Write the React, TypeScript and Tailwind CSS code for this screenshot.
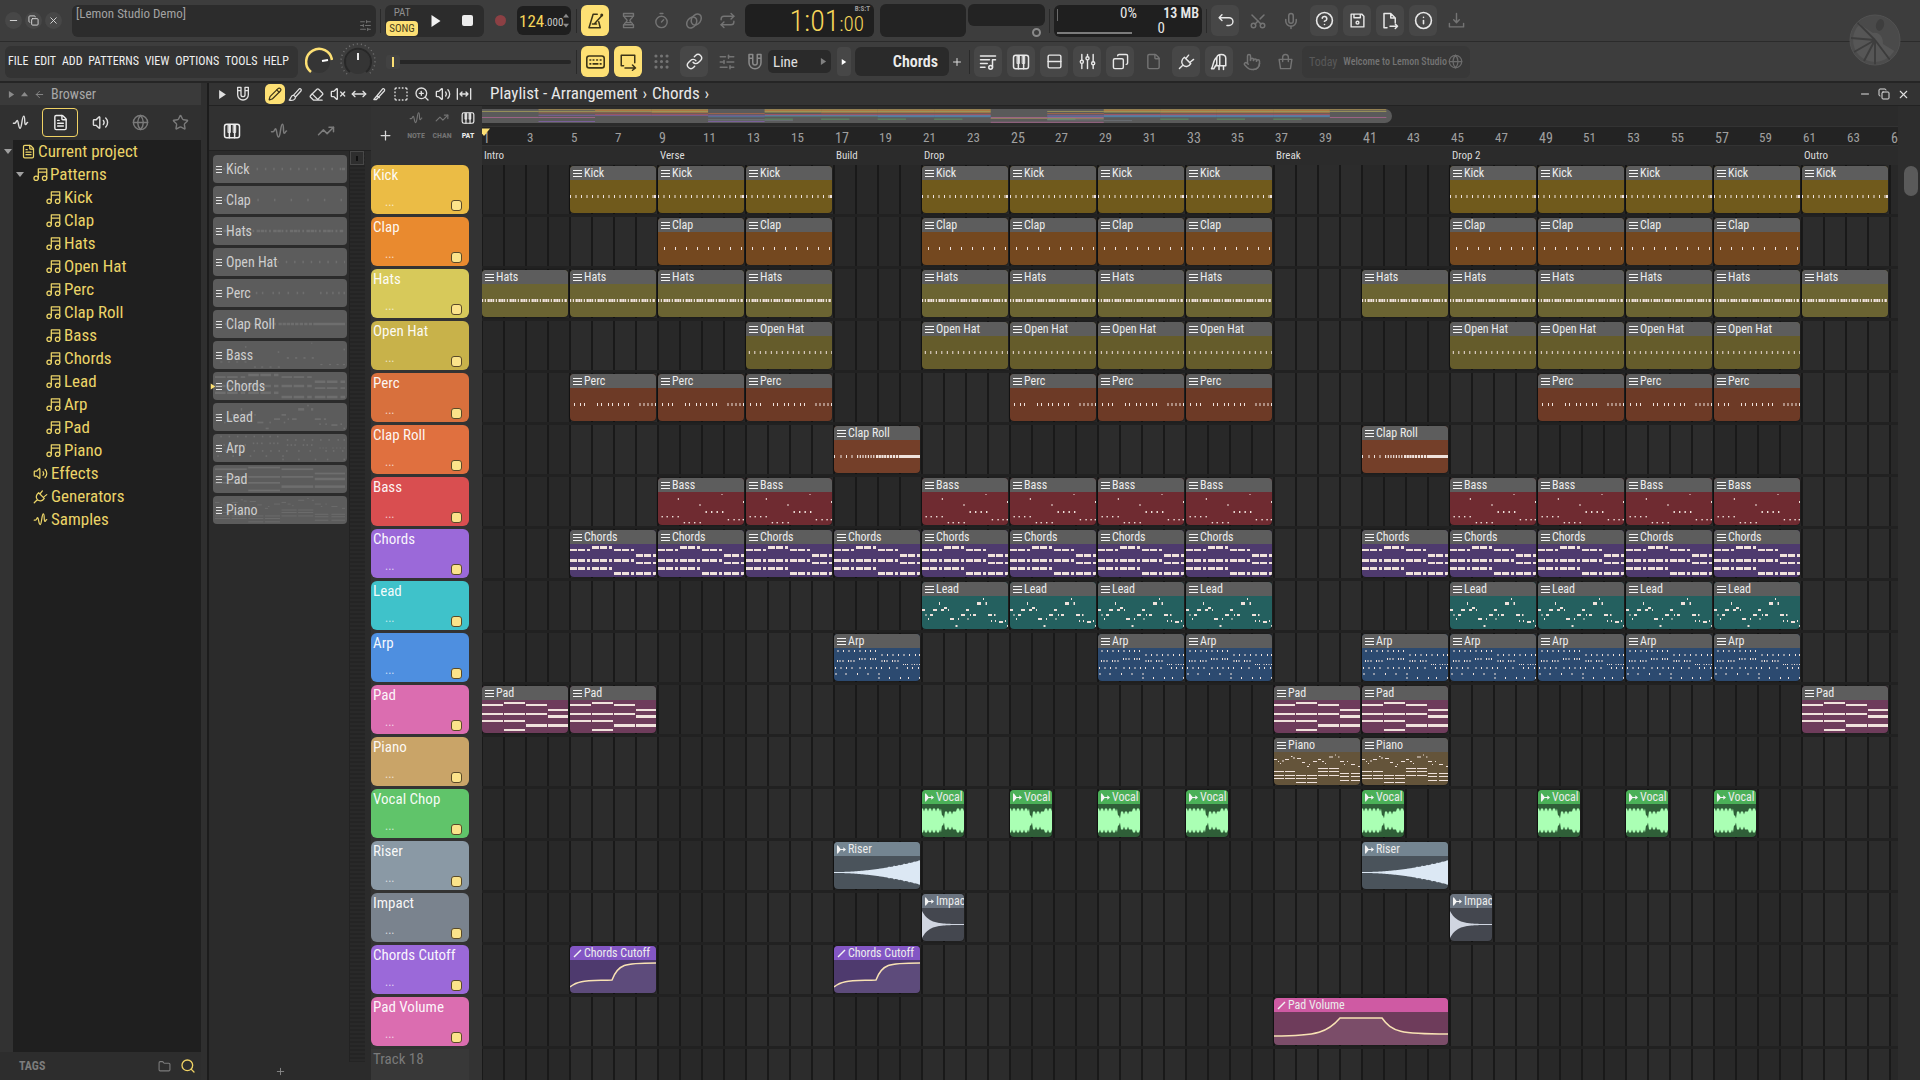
import type { ReactNode } from 'react'
import {
  ArrowLeft,
  CircleHelp,
  Copy,
  Eraser,
  File,
  FileText,
  Folder,
  Globe,
  Grip,
  Info,
  Link,
  Mic,
  Minus,
  MoveHorizontal,
  Pencil,
  Plus,
  Pointer,
  Repeat,
  Rows2,
  Scissors,
  Search,
  SlidersHorizontal,
  SquareDashed,
  Star,
  Timer,
  TrendingUp,
  Volume2,
  VolumeX,
  X,
  ZoomIn,
} from 'lucide-react'

type Rect = [x: number, y: number, w: number, h: number]
type ClipKind = 'pattern' | 'audio' | 'automation'

interface Track {
  name: string
  kind: ClipKind
  color: string
  body: string
  head: string
  bars: number[]
  length: number
  label?: string
}

/* ---------- note data, in a 86 x 33 box ---------- */

const range = (n: number) => Array.from({ length: n }, (_, i) => i)

const chordHit = (x: number, rows: [number, number][]): Rect[] =>
  rows.flatMap(([y, h]) => [
    [x, y, 7, h] as Rect,
    [x + 8, y, 7, h] as Rect,
    [x + 17, y, 3, h] as Rect,
  ])

const row = (y: number, xs: number[], w = 1, h = 2): Rect[] => xs.map((x) => [x, y, w, h] as Rect)

const notes: Record<string, Rect[]> = {
  Kick: [...range(16).map((i) => [i * 5.5, 15, 1, 3] as Rect), [84, 15, 2, 3]],
  Clap: range(8).map((i) => [6 + i * 11, 15, 1, 3] as Rect),
  Hats: range(31).map((i) => [i * 2.75, 15, i % 4 < 2 ? 1.2 : 2.3, 3] as Rect),
  'Open Hat': range(16).map((i) => [2.8 + i * 5.5, 15, 1, 3] as Rect),
  Perc: row(15, [4, 10, 14, 27, 31, 38, 42, 48, 54, 58, 69.5, 73.5, 77.5, 81.5, 85], 1, 3),
  'Clap Roll': [
    ...row(15, [0, 6.5, 12, 17.5], 1, 3),
    ...row(15, [23, 25.7, 28.4, 31.1, 33.8, 36.5, 39.2], 1.2, 3),
    ...row(15, [42, 44.7, 47.4, 50.1, 53, 56, 59, 62], 2.2, 3),
    [65, 15, 21, 3],
  ],
  Bass: [
    ...row(24, [3.5, 8.5, 14, 19.5], 1.4, 1.4),
    ...row(30, [25.7, 30.5, 36, 41.5], 1.4, 1.4),
    ...row(19, [47.5, 53, 58.5, 64], 1.4, 2),
    ...row(27, [69.7, 75.4, 80.4, 84.6], 1.4, 1.4),
    [19.8, 6, 1, 2],
    [41.5, 12, 1, 2],
    [63.5, 2, 1, 1],
    [85, 9, 1, 2],
  ],
  Chords: [
    ...chordHit(0, [[5, 2], [15, 3], [23, 3]]),
    ...chordHit(22, [[2, 3], [15, 3], [23, 3]]),
    ...chordHit(44, [[5, 2], [15, 3], [28, 3]]),
    ...chordHit(66, [[10, 3], [18, 2], [28, 3]]),
  ],
  Lead: [
    [0, 13, 3, 2], [3.5, 18, 1, 2], [6, 22, 1, 2], [8, 18, 3, 2], [11, 13, 4, 2], [17, 6, 1, 3],
    [19, 13, 3, 2], [22, 11, 3, 2], [26, 13, 1, 2], [28, 22, 4, 2], [33.5, 29, 2, 2], [36, 22, 1, 2],
    [39, 18, 4, 2], [44, 13, 3, 2], [45.5, 22, 1, 2], [48, 18, 1, 2], [51, 18, 3, 2], [55, 6, 4, 3],
    [61, 2, 1, 2], [63.5, 6, 1.5, 3], [66, 18, 4, 2], [69, 24, 1, 2], [72, 18, 1.5, 2], [73, 24, 1, 2],
    [77, 25, 4, 2], [83, 24, 1, 2], [85, 29, 1, 2],
  ],
  Arp: [
    ...row(2, [3.5, 9, 14.5, 20, 25.5, 31, 36, 41]),
    ...row(6, [47.5, 53, 58.5, 64, 69.5, 75, 81, 85]),
    ...row(10, [25, 27.5, 30.5, 36, 38.5, 41]),
    ...row(12, [3, 5.5, 8.5, 14, 16.5, 19.5, 47.5, 50, 52.5, 58, 60.5, 63.5]),
    ...row(16, [69, 71, 73, 77.5, 80, 82.5, 85], 1, 1),
    ...row(19, [1, 6.5, 12, 17.5, 25.5, 31, 36.5, 42, 47, 55, 62.5, 73, 78, 84]),
    ...row(25, [1.5, 11.5, 23, 33.5, 44.5]),
    ...row(29, [44.5, 55, 66, 74, 85]),
  ],
  Pad: [
    ...row(4, [0, 44], 21, 2),
    ...row(13, [0, 22, 44], 21, 2),
    ...row(20, [0, 22], 21, 2),
    [22, 2, 21, 2],
    [22, 29, 21, 2],
    [66, 9, 20, 2],
    [66, 15, 20, 3],
    [44, 24, 21, 3],
    [66, 24, 20, 3],
  ],
  Piano: [
    [0, 7, 3, 1], [4, 9, 1, 1], [6, 11, 1, 1], [8, 8.5, 2, 1], [11, 7, 4, 1], [17, 4, 1.5, 1],
    [19, 5.5, 2, 1], [23, 6, 4, 1], [28, 10, 3, 1], [33, 14, 2, 1], [35, 12, 1, 1], [39, 9, 4, 1],
    [44, 7, 3, 1], [48, 9, 2, 1], [51, 11, 1, 1], [55, 4.5, 4, 1], [61, 2.5, 1, 1], [64, 4.5, 1.5, 1],
    [66, 9, 4, 1], [70, 12, 1, 1], [73, 9, 1, 1], [77, 12, 4, 1], [84, 14, 2, 1],
    ...row(19, [0, 11], 10, 1),
    ...row(23, [0, 11, 22, 33], 10, 1),
    ...row(26, [0, 11, 22, 33], 10, 1),
    ...row(30, [22, 33], 10, 1),
    ...row(16, [44, 55], 10, 1),
    ...row(19, [44, 55], 10, 1),
    ...row(23, [44, 55], 10, 1),
    ...row(21, [66, 77], 9, 1),
    ...row(24, [66, 77], 9, 1),
    ...row(28, [66, 77], 9, 1),
  ],
}

const drops = [21, 25, 29, 33, 45, 49, 53, 57]
const GREY = '#5d5d5d'

const tracks: Track[] = [
  { name: 'Kick', kind: 'pattern', color: '#ebbc45', body: '#705a1c', head: GREY, bars: [5, 9, 13, ...drops, 61], length: 4 },
  { name: 'Clap', kind: 'pattern', color: '#e98a2f', body: '#74481f', head: GREY, bars: [9, 13, ...drops], length: 4 },
  { name: 'Hats', kind: 'pattern', color: '#d7c95a', body: '#6b6432', head: GREY, bars: [1, 5, 9, 13, 41, ...drops, 61], length: 4 },
  { name: 'Open Hat', kind: 'pattern', color: '#c8b24a', body: '#655c2b', head: GREY, bars: [13, ...drops], length: 4 },
  { name: 'Perc', kind: 'pattern', color: '#d8703d', body: '#6d3a26', head: GREY, bars: [5, 9, 13, 25, 29, 33, 49, 53, 57], length: 4 },
  { name: 'Clap Roll', kind: 'pattern', color: '#e0703f', body: '#743f29', head: GREY, bars: [17, 41], length: 4 },
  { name: 'Bass', kind: 'pattern', color: '#d94e50', body: '#6f2b31', head: GREY, bars: [9, 13, ...drops], length: 4 },
  { name: 'Chords', kind: 'pattern', color: '#9b69d9', body: '#4e3a6e', head: GREY, bars: [5, 9, 13, 17, 41, ...drops], length: 4 },
  { name: 'Lead', kind: 'pattern', color: '#3fc2ca', body: '#24605f', head: GREY, bars: drops, length: 4 },
  { name: 'Arp', kind: 'pattern', color: '#4e8fe0', body: '#2c4a70', head: GREY, bars: [17, 29, 33, 41, 45, 49, 53, 57], length: 4 },
  { name: 'Pad', kind: 'pattern', color: '#db6db0', body: '#6e3c5b', head: GREY, bars: [1, 5, 37, 41, 61], length: 4 },
  { name: 'Piano', kind: 'pattern', color: '#c9a468', body: '#64543a', head: GREY, bars: [37, 41], length: 4 },
  { name: 'Vocal Chop', kind: 'audio', color: '#60c46a', body: '#2f5f38', head: '#4bb058', bars: [21, 25, 29, 33, 41, 49, 53, 57], length: 2, label: 'Vocal' },
  { name: 'Riser', kind: 'audio', color: '#8a99a5', body: '#4a535b', head: '#748591', bars: [17, 41], length: 4 },
  { name: 'Impact', kind: 'audio', color: '#7a838e', body: '#44474f', head: '#6b7480', bars: [21, 45], length: 2 },
  { name: 'Chords Cutoff', kind: 'automation', color: '#9b69d9', body: '#4e3a6e', head: '#8356c4', bars: [5, 17], length: 4 },
  { name: 'Pad Volume', kind: 'automation', color: '#db6db0', body: '#6e3c5b', head: '#cf5aa3', bars: [37], length: 8 },
]

const patterns = tracks.filter((t) => t.kind === 'pattern').map((t) => t.name)

const markers = [
  { bar: 1, name: 'Intro' },
  { bar: 9, name: 'Verse' },
  { bar: 17, name: 'Build' },
  { bar: 21, name: 'Drop' },
  { bar: 37, name: 'Break' },
  { bar: 45, name: 'Drop 2' },
  { bar: 61, name: 'Outro' },
]

/* ---------- icons that lucide lacks ---------- */

interface IconProps {
  size?: number
  className?: string
}

function Svg({ size = 18, className, children }: IconProps & { children: ReactNode }) {
  return (
    <svg
      width={size}
      height={size}
      viewBox="0 0 24 24"
      fill="none"
      stroke="currentColor"
      strokeWidth="2"
      strokeLinecap="round"
      strokeLinejoin="round"
      className={className}
      aria-hidden="true"
    >
      {children}
    </svg>
  )
}

const WaveIcon = (p: IconProps) => (
  <Svg {...p}>
    <path d="M2 13h2c2 0 2-4 3.500-4S9 20 11.500 20 14 3 16.500 3 17 15 19 15s1-3 3-3" />
  </Svg>
)

const KeysIcon = (p: IconProps) => (
  <Svg {...p}>
    <rect x="2" y="3" width="20" height="18" rx="3" />
    <path d="M8.500 14v7M15.500 14v7" />
    <path d="M7 4h3v10H7zM14 4h3v10h-3z" fill="currentColor" strokeWidth="1" />
  </Svg>
)

const NotesIcon = (p: IconProps) => (
  <Svg {...p}>
    <path d="M8.500 18V3H22v15M8.500 8H22" />
    <circle cx="5" cy="18" r="3.500" />
    <circle cx="18.500" cy="18" r="3.500" />
  </Svg>
)

const MagnetIcon = (p: IconProps) => (
  <Svg {...p}>
    <path d="M4 2h5v11a3 3 0 0 0 6 0V2h5v11a8 8 0 0 1-16 0zM4 7h5M15 7h5" />
  </Svg>
)

const MetronomeIcon = (p: IconProps) => (
  <Svg {...p}>
    <path d="M15 3H9.500L4 21h15l-2-8M11 16L21 5M8.500 16H14" />
    <circle cx="21" cy="4" r="1" />
  </Svg>
)

const HourglassIcon = (p: IconProps) => (
  <Svg {...p}>
    <path d="M5 2h14v4H5zM5 18h14v4H5zM6 6c0 3 4 4 4 6s-4 3-4 6M18 6c0 3-4 4-4 6s4 3 4 6M9 15h6" />
  </Svg>
)

const KeyboardIcon = (p: IconProps) => (
  <Svg {...p}>
    <rect x="1" y="5" width="22" height="15" rx="3" />
    <path d="M5 10h1M9 10h1M13.500 10h1M18 10h1M5 15h1M9 15h6M18 15h1" />
  </Svg>
)

const LoopToIcon = (p: IconProps) => (
  <Svg {...p}>
    <path d="M6 17H3V3h18v10M8 20h14M18 16l4 4-4 3" />
  </Svg>
)

const RingsIcon = (p: IconProps) => (
  <Svg {...p}>
    <ellipse cx="9" cy="14" rx="6" ry="8" transform="rotate(35 9 14)" />
    <ellipse cx="15" cy="10" rx="6" ry="8" transform="rotate(35 15 10)" />
  </Svg>
)

const UndoIcon = (p: IconProps) => (
  <Svg {...p}>
    <path d="M7 4L3 8l4 4M3 8h14a5 5 0 0 1 0 11h-3" />
  </Svg>
)

const SaveIcon = (p: IconProps) => (
  <Svg {...p}>
    <path d="M3 3h15l3 3v15H3zM7 3v5h9V3" />
    <circle cx="12" cy="15" r="2" />
  </Svg>
)

const ExportIcon = (p: IconProps) => (
  <Svg {...p}>
    <path d="M8 21H4V2h9l6 6v6M13 2v6h6M12 19h10M19 16l3 3-3 3" />
  </Svg>
)

const DownloadIcon = (p: IconProps) => (
  <Svg {...p}>
    <path d="M12 2v13M8 11l4 4 4-4M2 16v5h20v-5" />
  </Svg>
)

const PlaylistIcon = (p: IconProps) => (
  <Svg {...p}>
    <path d="M2 4h20M2 9h12M2 14h9M2 19h6M18 19V9h4" />
    <circle cx="15.500" cy="19" r="2.500" />
  </Svg>
)

const MixerIcon = (p: IconProps) => (
  <Svg {...p}>
    <path d="M4 2v8M4 15v7M12 2v3M12 10v12M20 2v10M20 17v5" />
    <circle cx="4" cy="12.500" r="2.200" />
    <circle cx="12" cy="7.500" r="2.200" />
    <circle cx="20" cy="14.500" r="2.200" />
  </Svg>
)

const PlugIcon = (p: IconProps) => (
  <Svg {...p}>
    <path d="M2 22l4-4M9 6l9 9c-3 5-8 5-11 2s-2-8 2-11zM11 8l4-5M17 13l5-4" />
  </Svg>
)

const BrushIcon = (p: IconProps) => (
  <Svg {...p}>
    <path d="M9 13L18 3c2-1 4 1 3 3l-9 10zM9 13c-5 0-4 6-7 8 5 1 10 0 10-5z" />
  </Svg>
)

const BagIcon = (p: IconProps) => (
  <Svg {...p}>
    <path d="M3 9h18l-2 13H5zM8 12V6a4 4 0 0 1 8 0v6" />
  </Svg>
)

const KnifeIcon = (p: IconProps) => (
  <Svg {...p}>
    <path d="M3 20h4L20 6c1-2-1-4-3-3L8 14l4 3M3 20l5-6" />
  </Svg>
)

const FitIcon = (p: IconProps) => (
  <Svg {...p}>
    <path d="M2 4v16M22 4v16M6 12h12M9 9l-3 3 3 3M15 9l3 3-3 3" />
  </Svg>
)

const TapperIcon = (p: IconProps) => (
  <Svg {...p}>
    <path d="M9 17V7c0-3 2-5 6-5s6 2 6 5v10zM9 6C4 9 5 16 2 21h3l3-5M12 17v5M18 17v5M13 3v14" />
  </Svg>
)

function Triangle({ dir, className }: { dir: 'right' | 'down' | 'up'; className?: string }) {
  const d = { right: 'M1 0l6 4-6 4z', down: 'M0 1h8L4 6z', up: 'M0 6h8L4 1z' }[dir]
  return (
    <svg viewBox="0 0 8 8" className={className} fill="currentColor" aria-hidden="true">
      <path d={d} />
    </svg>
  )
}

function LemonLogo() {
  return (
    <svg width="52" height="52" viewBox="0 0 52 52" aria-hidden="true">
      <circle cx="26" cy="26" r="25" fill="#4c4c4c" />
      <circle cx="26" cy="26" r="22" fill="#565656" />
      <g stroke="#3e3e3e" strokeWidth="2">
        <path d="M26 26L8 8M26 26L2 24M26 26L5 38M26 26L15 47M26 26v25M26 26l15 20" />
      </g>
      <path d="M9 9A24 24 0 0 1 47 38L34 30C34 22 30 18 24 19z" fill="#4a4a4a" />
      <ellipse cx="31" cy="11" rx="4" ry="6" fill="#3e3e3e" transform="rotate(15 31 11)" />
      <path d="M8 8l18 18 15 20" stroke="#3b3b3b" strokeWidth="1" fill="none" />
      <circle cx="26" cy="26" r="25" fill="none" stroke="#525252" strokeWidth="1" />
    </svg>
  )
}

/* ---------- clip drawings ---------- */

function NoteView({ name, className }: { name: string; className?: string }) {
  return (
    <svg viewBox="0 0 86 33" preserveAspectRatio="none" className={className} aria-hidden="true">
      {notes[name].map(([x, y, w, h], i) => (
        <rect key={i} x={x} y={y} width={w} height={h} fill="currentColor" />
      ))}
    </svg>
  )
}

function mirrored(tops: [number, number][]) {
  const up = tops.map(([x, a]) => `${x},${16.5 - a}`)
  const down = [...tops].reverse().map(([x, a]) => `${x},${16.5 + a}`)
  return [...up, ...down].join(' ')
}

// the chop is loud at both ends, pinches in the middle and has a notch every few pixels
const vocalWave = range(43).map((i) => {
  const level = i < 20 ? 12 : i < 23 ? 5 : i < 34 ? 9 : 12
  return [i, level - (i % 4 === 2 ? 3 : 0)] as [number, number]
})
const riserWave = range(87).map((i) => [i, 0.4 + 11.5 * Math.pow(i / 86, 1.9) + (i > 50 && i % 5 === 0 ? 0.7 : 0)] as [number, number])
const impactWave = range(43).map((i) => [i, 0.4 + 13 * Math.exp(-i / 7)] as [number, number])

function AudioView({ name }: { name: string }) {
  const [wave, color, width] =
    name === 'Riser'
      ? ([riserWave, '#dce8f4', 86] as const)
      : name === 'Impact'
        ? ([impactWave, '#d0d5e0', 42] as const)
        : ([vocalWave, '#aaffb4', 42] as const)
  return (
    <svg viewBox={`0 0 ${width} 33`} preserveAspectRatio="none" className="h-full w-full" aria-hidden="true">
      <polygon points={mirrored(wave as [number, number][])} fill={color} />
    </svg>
  )
}

function AutomationView({ name }: { name: string }) {
  const wide = name === 'Pad Volume'
  const width = wide ? 174 : 86
  const line = wide
    ? 'M0 24C44 24 54 20 66 6H108C118 20 126 22 174 22'
    : 'M0 27C8 20 16 21 42 20C48 4 54 3 86 3'
  return (
    <svg viewBox={`0 0 ${width} 33`} preserveAspectRatio="none" className="h-full w-full" aria-hidden="true">
      <path d={`${line}V33H0z`} fill="#ffffff" fillOpacity="0.09" />
      <path d={line} fill="none" stroke="#f8e2b4" strokeWidth="1.5" />
    </svg>
  )
}

function ClipGlyph({ kind }: { kind: ClipKind }) {
  if (kind === 'pattern') {
    return <svg width="9" height="9" viewBox="0 0 9 9" stroke="#f4f4f4" aria-hidden="true"><path d="M0 1.500h9M0 4.500h9M0 7.500h9" /></svg>
  }
  if (kind === 'audio') {
    return <svg width="9" height="9" viewBox="0 0 10 9" fill="#f4f4f4" aria-hidden="true"><path d="M0 0h1l3 4h3V2l3 2.500L7 7V5H4L1 9H0z" /></svg>
  }
  return <svg width="9" height="9" viewBox="0 0 9 9" stroke="#f4f4f4" strokeWidth="1.500" aria-hidden="true"><path d="M1 8l7-7" /></svg>
}

function Clip({ track, bar }: { track: Track; bar: number }) {
  return (
    <div
      className="row-start-1 mt-px mr-[2px] flex h-[47px] min-w-0 flex-col overflow-hidden rounded-[4px] shadow-[0_0_2px_#000]"
      style={{ gridColumn: `${bar} / span ${track.length}`, background: track.body }}
    >
      <div className="flex h-[14px] shrink-0 items-center gap-[2px] pl-[3px] text-[12px] leading-[12px] whitespace-nowrap text-[#ececec]" style={{ background: track.head }}>
        <span className="shrink-0"><ClipGlyph kind={track.kind} /></span>
        <span className="pb-px">{track.label ?? track.name}</span>
      </div>
      <div className="min-h-0 flex-1">
        {track.kind === 'pattern' && <NoteView name={track.name} className="h-full w-full text-[#f0e2dc]" />}
        {track.kind === 'audio' && <AudioView name={track.name} />}
        {track.kind === 'automation' && <AutomationView name={track.name} />}
      </div>
    </div>
  )
}

/* ---------- top toolbar ---------- */

interface ToolButtonProps {
  label: string
  active?: boolean
  dim?: boolean
  children: ReactNode
}

function ToolButton({ label, active, dim, children }: ToolButtonProps) {
  const look = active
    ? 'bg-[#fde074] text-[#3c3418]'
    : dim
      ? 'text-[#747474]'
      : 'bg-[#474747] text-[#e8e8e8]'
  return (
    <button type="button" aria-label={label} className={`flex h-[31px] w-7 shrink-0 items-center justify-center rounded-[6px] ${look}`}>
      {children}
    </button>
  )
}

function Divider() {
  return (
    <div className="flex w-[9px] shrink-0 justify-center">
      <div className="h-6 w-px bg-[#2a2a2a]" />
    </div>
  )
}

function TransportRow() {
  return (
    <div className="flex h-[41px] items-center overflow-hidden pl-[5px]">
      <div className="mr-[10px] flex gap-[3px]">
        {[Minus, Copy, X].map((Icon, i) => (
          <button key={i} type="button" aria-label={['Minimize', 'Restore', 'Close'][i]} className="flex h-[17px] w-[17px] items-center justify-center rounded-full bg-[#474747] text-[#dcdcdc]">
            <Icon size={11} />
          </button>
        ))}
      </div>

      <div className="flex h-8 w-[304px] shrink-0 justify-between rounded-[6px] bg-[#2c2c2c] px-1">
        <span className="mt-px text-[13px] leading-[16px] text-[#a2a2a2]">[Lemon Studio Demo]</span>
        <SlidersHorizontal size={13} className="mb-[5px] self-end text-[#707070]" />
      </div>
      <Divider />

      <div className="flex h-8 w-[99px] shrink-0 items-center rounded-[6px] bg-[#2c2c2c]">
        <div className="ml-px flex w-8 flex-col items-center">
          <button type="button" className="h-[15px] text-[11px] leading-[14px] text-[#8f8f8f]">PAT</button>
          <button type="button" className="h-[15px] w-8 rounded-[4px] bg-[#fde074] text-[11px] leading-[15px] text-[#4a4020]">SONG</button>
        </div>
        <button type="button" aria-label="Play" className="ml-3 text-[#f2f2f2]"><Triangle dir="right" className="h-3 w-3" /></button>
        <button type="button" aria-label="Stop" className="ml-5 h-[11px] w-[11px] rounded-[2px] bg-[#ececec]" />
      </div>
      <div className="flex w-[33px] shrink-0 justify-center">
        <button type="button" aria-label="Record" className="h-[11px] w-[11px] rounded-full bg-[#8c4044]" />
      </div>
      <div className="mr-px flex h-[29px] w-[54px] shrink-0 items-center rounded-[6px] bg-[#1f1f1f] pl-[2px]">
        <span className="text-[17px] leading-[20px] text-[#f5d65a]">124</span>
        <span className="mt-[5px] text-[11px] leading-[14px] text-[#c8c8c8]">.000</span>
        <span className="ml-auto flex flex-col gap-1 pr-[2px] text-[#8a8a8a]">
          <Triangle dir="up" className="h-[6px] w-[6px]" />
          <Triangle dir="down" className="h-[6px] w-[6px]" />
        </span>
      </div>
      <Divider />

      <div className="mr-1 flex gap-[5px]">
        <ToolButton label="Metronome" active><MetronomeIcon /></ToolButton>
        <ToolButton label="Wait for input" dim><HourglassIcon size={17} /></ToolButton>
        <ToolButton label="Countdown" dim><Timer size={17} /></ToolButton>
        <ToolButton label="Overdub" dim><RingsIcon /></ToolButton>
        <ToolButton label="Loop record" dim><Repeat size={17} /></ToolButton>
      </div>

      <div className="relative mr-[6px] flex h-[33px] w-[129px] shrink-0 items-baseline justify-end rounded-[6px] bg-[#1f1f1f] pr-[10px] text-[#f5d65a]">
        <span className="text-[30px] leading-[34px] font-light">1:01</span>
        <span className="text-[21px] leading-[34px] font-light">:00</span>
        <span className="absolute top-px right-1 text-[7px] leading-[8px] font-bold text-[#9a9a9a]">B:S:T</span>
      </div>
      <div className="mr-[2px] h-[33px] w-[86px] shrink-0 rounded-[6px] bg-[#232323]" />
      <div className="flex h-[33px] w-[77px] shrink-0 flex-col items-end">
        <div className="h-[23px] w-full rounded-[6px] bg-[#232323]" />
        <div className="mt-[2px] mr-1 h-[9px] w-[9px] rounded-full border-2 border-[#8a8a8a]" />
      </div>
      <Divider />
      <div className="flex h-8 w-[148px] shrink-0 justify-between rounded-[6px] bg-[#1f1f1f] px-[3px] text-[15px] leading-[15px] text-[#e6e6e6]">
        <div className="flex w-[80px] flex-col justify-between pb-[3px]">
          <div className="flex justify-between pt-px"><span className="mt-[3px] h-3 w-px bg-[#6a6a6a]" />0%</div>
          <div className="h-[2px] w-[75px] bg-[#7c7c7c]" />
        </div>
        <div className="flex flex-col items-end pt-px">
          <span className="text-[14px] leading-[15px] font-semibold">13 MB</span>
          <span className="mr-[34px] leading-[14px]">0</span>
        </div>
      </div>
      <Divider />
      <div className="flex gap-[5px]">
        <ToolButton label="Undo"><UndoIcon size={17} /></ToolButton>
        <ToolButton label="Cut" dim><Scissors size={18} className="-rotate-90" /></ToolButton>
        <ToolButton label="Record audio" dim><Mic size={18} /></ToolButton>
        <ToolButton label="Help"><CircleHelp size={19} /></ToolButton>
        <ToolButton label="Save"><SaveIcon size={17} /></ToolButton>
        <ToolButton label="Export"><ExportIcon /></ToolButton>
        <ToolButton label="About"><Info size={19} /></ToolButton>
        <ToolButton label="Download" dim><DownloadIcon size={17} /></ToolButton>
      </div>
    </div>
  )
}

const menus = ['FILE', 'EDIT', 'ADD', 'PATTERNS', 'VIEW', 'OPTIONS', 'TOOLS', 'HELP']

function MenuRow() {
  return (
    <div className="flex h-[40px] items-center overflow-hidden border-t border-[#2b2b2b] pl-[5px]">
      <nav className="mr-[7px] flex h-8 w-[293px] shrink-0 items-center justify-between rounded-[6px] bg-[#333333] pr-[9px] pl-[3px]">
        {menus.map((m) => (
          <button key={m} type="button" className="pb-px text-[12px] leading-[16px] text-[#f0f0f0]">{m}</button>
        ))}
      </nav>

      <svg width="28" height="30" viewBox="0 0 28 30" fill="none" className="mr-[7px] shrink-0" aria-hidden="true">
        <circle cx="14" cy="15" r="11" fill="#353535" />
        <path d="M6 25A13 13 0 1 1 27 13" stroke="#fde074" strokeWidth="2.500" />
        <path d="M17 14l6-1" stroke="#fff" strokeWidth="2" />
      </svg>
      <svg width="36" height="38" viewBox="0 0 36 38" fill="none" className="mr-[10px] shrink-0" aria-hidden="true">
        <circle cx="18" cy="19" r="12" fill="#353535" />
        <path d="M10 29A13 13 0 1 1 26 29" stroke="#282828" strokeWidth="2" />
        <path d="M7 31A17 17 0 1 1 29 31" stroke="#727272" strokeWidth="1.500" strokeDasharray="1 3" />
        <path d="M18 10v7" stroke="#e8e8e8" strokeWidth="2" />
      </svg>

      <input
        type="range"
        aria-label="Song position"
        min={0}
        max={100}
        defaultValue={0}
        className="mr-px h-3 w-[185px] shrink-0 appearance-none bg-transparent [&::-webkit-slider-runnable-track]:h-1 [&::-webkit-slider-runnable-track]:rounded-full [&::-webkit-slider-runnable-track]:bg-[#262626] [&::-webkit-slider-thumb]:-mt-[5px] [&::-webkit-slider-thumb]:h-[14px] [&::-webkit-slider-thumb]:w-[14px] [&::-webkit-slider-thumb]:appearance-none [&::-webkit-slider-thumb]:rounded-[3px] [&::-webkit-slider-thumb]:border-x-[6px] [&::-webkit-slider-thumb]:border-y-2 [&::-webkit-slider-thumb]:border-[#424242] [&::-webkit-slider-thumb]:bg-[#fde074]"
      />
      <Divider />

      <div className="mr-1 flex gap-[5px]">
        <ToolButton label="Typing keyboard" active><KeyboardIcon size={19} /></ToolButton>
        <ToolButton label="Auto scroll" active><LoopToIcon /></ToolButton>
        <ToolButton label="Step edit" dim><Grip size={19} /></ToolButton>
        <ToolButton label="Link"><Link size={17} /></ToolButton>
        <ToolButton label="Multilink" dim><SlidersHorizontal size={18} /></ToolButton>
      </div>
      <span className="mr-1 flex w-[19px] shrink-0 justify-end text-[#8a8a8a]"><MagnetIcon size={18} /></span>
      <div className="relative mr-[6px] shrink-0">
        <select aria-label="Snap" className="h-[23px] w-[63px] appearance-none rounded-[5px] bg-[#2a2a2a] pl-[5px] text-[15px] leading-[20px] text-[#e0e0e0]">
          <option>Line</option>
        </select>
        <Triangle dir="right" className="pointer-events-none absolute top-2 right-1 h-[7px] w-[7px] text-[#808080]" />
      </div>
      <button type="button" aria-label="Previous pattern" className="mr-1 flex h-[29px] w-[14px] shrink-0 items-center justify-center rounded-[4px] bg-[#474747] text-white">
        <Triangle dir="right" className="h-[6px] w-[6px]" />
      </button>
      <button type="button" className="h-[29px] w-[94px] shrink-0 rounded-[6px] bg-[#2a2a2a] pr-[11px] text-right text-[16px] font-semibold text-[#ececec]">Chords</button>
      <button type="button" aria-label="New pattern" className="flex w-4 shrink-0 justify-center text-[#dcdcdc]"><Plus size={12} /></button>
      <Divider />

      <div className="mr-[3px] flex gap-[5px]">
        <ToolButton label="Playlist"><PlaylistIcon /></ToolButton>
        <ToolButton label="Piano roll"><KeysIcon /></ToolButton>
        <ToolButton label="Channel rack"><Rows2 size={17} /></ToolButton>
        <ToolButton label="Mixer"><MixerIcon size={17} /></ToolButton>
        <ToolButton label="Browser"><Copy size={17} className="-scale-x-100" /></ToolButton>
        <ToolButton label="Project" dim><File size={17} /></ToolButton>
        <ToolButton label="Plugins"><PlugIcon size={17} /></ToolButton>
        <ToolButton label="Tempo tapper"><TapperIcon /></ToolButton>
        <ToolButton label="Touch" dim><Pointer size={18} /></ToolButton>
        <ToolButton label="Shop" dim><BagIcon size={17} /></ToolButton>
      </div>
      <div className="flex h-8 w-[168px] shrink-0 items-center rounded-[6px] bg-[#383838] px-[7px] text-[12px] leading-[16px] whitespace-nowrap">
        <span className="mr-[6px] text-[#585858]">Today</span>
        <span className="text-[10px] font-medium text-[#747474]">Welcome to Lemon Studio</span>
        <Globe size={15} className="ml-auto shrink-0 text-[#6c6c6c]" />
      </div>
    </div>
  )
}

/* ---------- browser ---------- */

function Browser() {
  const tabs = [WaveIcon, FileText, Volume2, Globe, Star]
  return (
    <aside className="flex w-[201px] shrink-0 flex-col bg-[#303030]">
      <div className="flex h-[22px] items-center gap-[6px] bg-[#3a3a3a] pl-2 text-[#8a8a8a]">
        <Triangle dir="right" className="h-[7px] w-[7px]" />
        <Triangle dir="up" className="h-[7px] w-[7px]" />
        <ArrowLeft size={11} />
        <span className="text-[14px] leading-[18px] text-[#a8a8a8]">Browser</span>
      </div>
      <div className="flex h-[35px] items-center gap-1 pl-[2px]">
        {tabs.map((Icon, i) => (
          <button
            key={i}
            type="button"
            aria-label={['Samples', 'Project', 'Sounds', 'Online', 'Favorites'][i]}
            className={
              i === 1
                ? 'flex h-[29px] w-9 items-center justify-center rounded-[4px] border border-[#f0d264] text-[#ececec]'
                : i > 2
                  ? 'flex h-[29px] w-9 items-center justify-center text-[#7a7a7a]'
                  : 'flex h-[29px] w-9 items-center justify-center text-[#dcdcdc]'
            }
          >
            <Icon size={17} />
          </button>
        ))}
      </div>
      <ul className="min-h-0 flex-1 overflow-hidden bg-[linear-gradient(90deg,#323232_13px,#1f1f1f_13px)] text-[17px] leading-[23px] whitespace-nowrap text-[#ebd468]">
        <li className="flex h-[23px] items-center pl-1">
          <Triangle dir="down" className="mr-[9px] h-2 w-2 text-[#a0a0a0]" />
          <FileText size={15} className="mr-[2px]" />
          Current project
        </li>
        <li className="flex h-[23px] items-center pl-4">
          <Triangle dir="down" className="mr-[9px] h-2 w-2 text-[#a0a0a0]" />
          <NotesIcon size={15} className="mr-[2px]" />
          Patterns
        </li>
        {patterns.map((p) => (
          <li key={p} className="flex h-[23px] items-center gap-[3px] pl-[46px]">
            <NotesIcon size={15} />
            {p}
          </li>
        ))}
        {[
          { name: 'Effects', Icon: Volume2 },
          { name: 'Generators', Icon: PlugIcon },
          { name: 'Samples', Icon: WaveIcon },
        ].map(({ name, Icon }) => (
          <li key={name} className="flex h-[23px] items-center gap-[3px] pl-[33px]">
            <Icon size={15} />
            {name}
          </li>
        ))}
      </ul>
      <div className="flex h-7 items-center bg-[#2d2d2d] pr-[5px] pl-[19px] text-[#7c7c7c]">
        <span className="text-[12px] leading-[14px] font-bold">TAGS</span>
        <Folder size={13} className="ml-auto" />
        <button type="button" aria-label="Search" className="ml-[9px] text-[#f0d264]"><Search size={16} /></button>
      </div>
    </aside>
  )
}

/* ---------- playlist ---------- */

function PlaylistTitle() {
  const tools = [
    { label: 'Paint', el: <BrushIcon size={15} /> },
    { label: 'Delete', el: <Eraser size={15} /> },
    { label: 'Mute', el: <VolumeX size={16} /> },
    { label: 'Slip', el: <MoveHorizontal size={16} /> },
    { label: 'Slice', el: <KnifeIcon size={15} /> },
    { label: 'Select', el: <SquareDashed size={16} /> },
    { label: 'Zoom', el: <ZoomIn size={16} /> },
    { label: 'Playback', el: <Volume2 size={16} /> },
    { label: 'Fit', el: <FitIcon size={16} /> },
  ]
  return (
    <div className="flex h-[23px] shrink-0 items-center border-b border-[#222222] bg-[#333333] pl-[9px] text-[#e0e0e0]">
      <Triangle dir="right" className="mr-2 h-[9px] w-[9px]" />
      <MagnetIcon size={16} className="mr-[14px]" />
      <button type="button" aria-label="Draw" className="flex h-5 w-5 items-center justify-center rounded-[5px] bg-[#fde074] text-[#3c3418]"><Pencil size={14} /></button>
      {tools.map((t) => (
        <button key={t.label} type="button" aria-label={t.label} className="flex w-[21px] justify-center">{t.el}</button>
      ))}
      <h1 className="ml-4 pb-[2px] text-[17px] leading-[20px] whitespace-nowrap text-[#e8e8e8]">
        Playlist - Arrangement <span className="mx-px">›</span> Chords <span className="ml-px">›</span>
      </h1>
      <div className="ml-auto flex gap-[7px] pr-[10px]">
        <Minus size={12} />
        <Copy size={12} />
        <X size={13} />
      </div>
    </div>
  )
}

function PatternPicker() {
  return (
    <div className="flex w-[162px] shrink-0 flex-col bg-[#2b2b2b]">
      <div className="flex h-[44px] shrink-0 items-center gap-[29px] bg-[#313131] pt-[6px] pl-[14px]">
        <KeysIcon className="text-[#ececec]" />
        <WaveIcon className="text-[#7c7c7c]" />
        <TrendingUp size={18} className="text-[#7c7c7c]" />
      </div>
      <div className="flex min-h-0 flex-1 border-t border-[#222222]">
        <div className="flex w-[140px] flex-col gap-[3px] pt-1 pl-1">
          {patterns.map((p) => (
            <button key={p} type="button" className="relative flex h-7 w-[134px] items-center gap-1 rounded-[4px] bg-[#5c5c5c] pl-[3px] text-[14px] leading-[18px] text-[#cecece]">
              <NoteView name={p} className="absolute inset-0 h-full w-full px-[2px] text-[#8a8a8a] opacity-40" />
              {p === 'Chords' && <Triangle dir="right" className="absolute -left-[3px] h-[7px] w-[6px] text-[#fde074]" />}
              <svg width="6" height="9" viewBox="0 0 6 9" stroke="#e4e4e4" aria-hidden="true"><path d="M0 1.500h6M0 4.500h6M0 7.500h6" /></svg>
              <span className="relative">{p}</span>
            </button>
          ))}
        </div>
        <div className="w-4 border-l border-[#222222] bg-[repeating-linear-gradient(#292929_0_2px,#242424_2px_4px)]">
          <div className="flex h-[14px] w-[14px] items-center justify-center border border-[#484848] bg-[#2e2e2e]">
            <span className="h-[5px] w-[2px] bg-[#111111]" />
          </div>
        </div>
      </div>
      <button type="button" aria-label="Add pattern" className="flex h-[18px] shrink-0 items-center justify-center pr-[20px] text-[#8a8a8a]"><Plus size={11} /></button>
    </div>
  )
}

function TrackHeaders() {
  return (
    <div className="flex w-[111px] shrink-0 flex-col bg-[#333333]">
      <div className="flex h-[59px] shrink-0 items-center">
        <button type="button" aria-label="Add track" className="mr-[11px] ml-[7px] text-[#d8d8d8]"><Plus size={15} /></button>
        <div className="flex gap-[2px] pb-[20px] text-[8px] leading-[10px] font-bold text-[#747474]">
          <span className="flex w-6 flex-col items-center gap-[6px]"><WaveIcon size={14} />NOTE</span>
          <span className="flex w-6 flex-col items-center gap-[6px]"><TrendingUp size={14} />CHAN</span>
          <span className="flex w-6 flex-col items-center gap-[6px] text-[#ececec]"><KeysIcon size={14} />PAT</span>
        </div>
      </div>
      {tracks.map((t) => (
        <div key={t.name} className="mb-[3px] flex h-[49px] w-[98px] shrink-0 flex-col justify-between rounded-[6px] pl-[2px]" style={{ background: t.color }}>
          <span className="text-[15px] leading-[21px] whitespace-nowrap text-white/95">{t.name}</span>
          <span className="flex items-end justify-between pr-[7px] pb-[3px] pl-3">
            <span className="pb-1 text-[12px] leading-[10px] text-white/70">...</span>
            <input type="checkbox" defaultChecked aria-label={`${t.name} enabled`} className="h-[11px] w-[11px] appearance-none rounded-[3px] border border-[#5a4a28] bg-[#fbe38a]" />
          </span>
        </div>
      ))}
      <div className="min-h-0 w-[98px] flex-1 overflow-hidden bg-[#383838] pl-[2px] text-[15px] leading-[21px] text-[#7a7a7a]">Track 18</div>
    </div>
  )
}

function Minimap() {
  return (
    <svg width="910" height="14" viewBox="0 0 64.4 18" preserveAspectRatio="none" className="rounded-r-[7px] bg-[#5a5a5a]" aria-hidden="true">
      {tracks.flatMap((t, i) =>
        t.bars.map((b) => (
          <rect key={`${t.name}${b}`} x={b - 1} y={i + 0.5} width={t.length} height={1} fill={t.color} fillOpacity="0.65" />
        )),
      )}
    </svg>
  )
}

const grid = 'grid grid-cols-[repeat(66,22px)]'

function Timeline() {
  return (
    <div className="flex min-w-0 flex-1 flex-col overflow-hidden bg-[#2b2b2b]">
      <div className="flex h-[20px] shrink-0 items-center"><Minimap /></div>
      <div className={`${grid} relative h-[20px] shrink-0 border-y border-[#333333] bg-[#232323] text-[#a0a0a0]`}>
        <Triangle dir="down" className="absolute top-0 -left-1 h-3 w-3 text-[#fde074]" />
        {range(33).map((i) => {
          const bar = i * 2 + 1
          return (
            <span key={bar} className={`col-span-2 pl-px leading-[22px] ${bar % 8 === 1 ? 'text-[14px]' : 'text-[13px]'}`}>
              {bar}
            </span>
          )
        })}
      </div>
      <div className={`${grid} h-[19px] shrink-0`}>
        {markers.map((m) => (
          <span key={m.name} className="row-start-1 pl-[2px] text-[11px] leading-[20px] whitespace-nowrap text-[#dcdcdc]" style={{ gridColumn: `${m.bar} / span 4` }}>
            {m.name}
          </span>
        ))}
      </div>
      {[...tracks, null].map((t, i) => (
        <div
          key={i}
          className={`${grid} h-[52px] shrink-0 border-b-[3px] border-[#212121] bg-[repeating-linear-gradient(90deg,#191919_0_1px,transparent_1px_21px,#191919_21px_22px),repeating-linear-gradient(90deg,#282828_0_88px,#2c2c2c_88px_176px)]`}
        >
          {t?.bars.map((b) => <Clip key={b} track={t} bar={b} />)}
        </div>
      ))}
    </div>
  )
}

export default function App() {
  return (
    <div className="relative flex h-screen flex-col overflow-hidden bg-[#2b2b2b] font-['Liberation_Sans_Narrow','Roboto_Condensed','Liberation_Sans',sans-serif]">
      <header className="shrink-0 border-b-2 border-[#252525] bg-[#3d3d3d]">
        <TransportRow />
        <MenuRow />
        <div className="absolute top-[14px] right-[19px]"><LemonLogo /></div>
      </header>

      <div className="flex min-h-0 flex-1">
        <Browser />
        <div className="w-2 shrink-0 border-r-2 border-[#1c1c1c] bg-[#2f2f2f]" />
        <main className="flex min-w-0 flex-1 flex-col">
          <PlaylistTitle />
          <div className="flex min-h-0 flex-1">
            <PatternPicker />
            <TrackHeaders />
            <Timeline />
            <div className="w-[22px] shrink-0 bg-[#2d2d2d] pt-[60px] pl-[6px]">
              <div className="h-[30px] w-[14px] rounded-full bg-[#5a5a5a]" />
            </div>
          </div>
        </main>
      </div>
    </div>
  )
}
